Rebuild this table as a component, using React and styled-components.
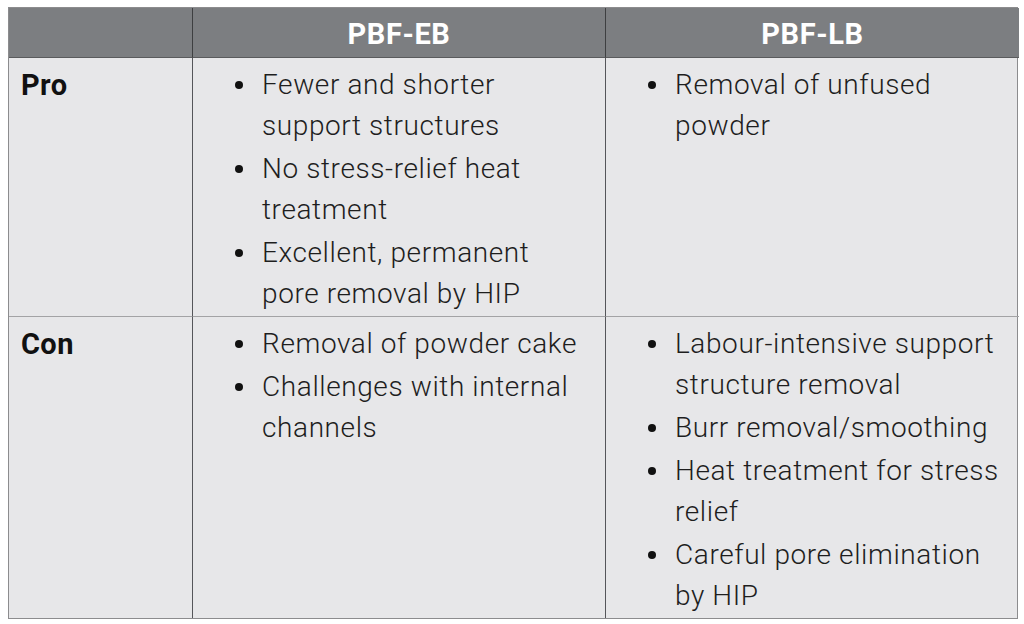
import React from 'react';
import styled, { createGlobalStyle } from 'styled-components';

const GlobalStyle = createGlobalStyle`
  html, body {
    margin: 0;
    padding: 0;
    background: #ffffff;
  }
  body {
    font-family: Roboto, "Liberation Sans", sans-serif;
  }
`;

const rows = [
  {
    label: 'Pro',
    eb: [
      ['Fewer and shorter', 'support structures'],
      ['No stress-relief heat', 'treatment'],
      ['Excellent, permanent', 'pore removal by HIP'],
    ],
    lb: [['Removal of unfused', 'powder']],
  },
  {
    label: 'Con',
    eb: [
      ['Removal of powder cake'],
      ['Challenges with internal', 'channels'],
    ],
    lb: [
      ['Labour-intensive support', 'structure removal'],
      ['Burr removal/smoothing'],
      ['Heat treatment for stress', 'relief'],
      ['Careful pore elimination', 'by HIP'],
    ],
  },
];

const App = () => {
  return (
    <>
      <GlobalStyle />
      <Page>
        <Table>
          <HeadCell />
          <HeadCell $divider>PBF-EB</HeadCell>
          <HeadCell $divider>PBF-LB</HeadCell>
          {rows.map((row) => (
            <React.Fragment key={row.label}>
              <LabelCell>{row.label}</LabelCell>
              <BodyCell>
                <BulletList>
                  {row.eb.map((lines, i) => (
                    <Bullet key={i}>
                      {lines.map((l, j) => (
                        <Line key={j}>{l}</Line>
                      ))}
                    </Bullet>
                  ))}
                </BulletList>
              </BodyCell>
              <BodyCell>
                <BulletList>
                  {row.lb.map((lines, i) => (
                    <Bullet key={i}>
                      {lines.map((l, j) => (
                        <Line key={j}>{l}</Line>
                      ))}
                    </Bullet>
                  ))}
                </BulletList>
              </BodyCell>
            </React.Fragment>
          ))}
        </Table>
      </Page>
    </>
  );
};

export default App;

const Page = styled.div`
  width: 1024px;
  height: 624px;
  padding: 7px 0 0 8px;
  box-sizing: border-box;
`;

const Table = styled.div`
  width: 1010px;
  display: grid;
  grid-template-columns: 183px 413px 414px;
  grid-template-rows: 50px auto auto;
  border: 1px solid #8c8c8e;
  box-sizing: border-box;
  background: #e7e7e9;
`;

const HeadCell = styled.div`
  background: #7c7e81;
  color: #ffffff;
  font-family: Roboto, "Liberation Sans", sans-serif;
  font-weight: 700;
  font-size: 29px;
  letter-spacing: 0.6px;
  display: flex;
  align-items: center;
  justify-content: center;
  border-left: ${(p) => (p.$divider ? '1px solid #3e3f41' : 'none')};
  border-bottom: 1px solid #5a5b5d;
  padding-top: 2px;
  box-sizing: border-box;
`;

const LabelCell = styled.div`
  font-family: Roboto, "Liberation Sans", sans-serif;
  font-weight: 700;
  font-size: 29px;
  letter-spacing: 0.4px;
  color: #111111;
  padding: 7px 0 0 12px;
  line-height: 41px;
  border-top: 1px solid #a3a3a5;
  &:nth-child(4) {
    border-top: none;
  }
`;

const BodyCell = styled.div`
  border-left: 1px solid #55565a;
  border-top: 1px solid #a3a3a5;
  padding: 6px 0 2px 0;
  &:nth-child(5),
  &:nth-child(6) {
    border-top: none;
  }
`;

const BulletList = styled.ul`
  list-style: none;
  margin: 0;
  padding: 0 0 0 69px;
  display: flex;
  flex-direction: column;
  gap: 2px;
`;

const Bullet = styled.li`
  position: relative;
  font-family: Roboto, "Liberation Sans", sans-serif;
  font-size: 28px;
  font-weight: 300;
  line-height: 41px;
  color: #1e1e1e;
  letter-spacing: 0.6px;
  &::before {
    content: '';
    position: absolute;
    left: -27px;
    top: 17px;
    width: 8px;
    height: 8px;
    border-radius: 50%;
    background: #111111;
  }
`;

const Line = styled.span`
  display: block;
  white-space: nowrap;
`;
